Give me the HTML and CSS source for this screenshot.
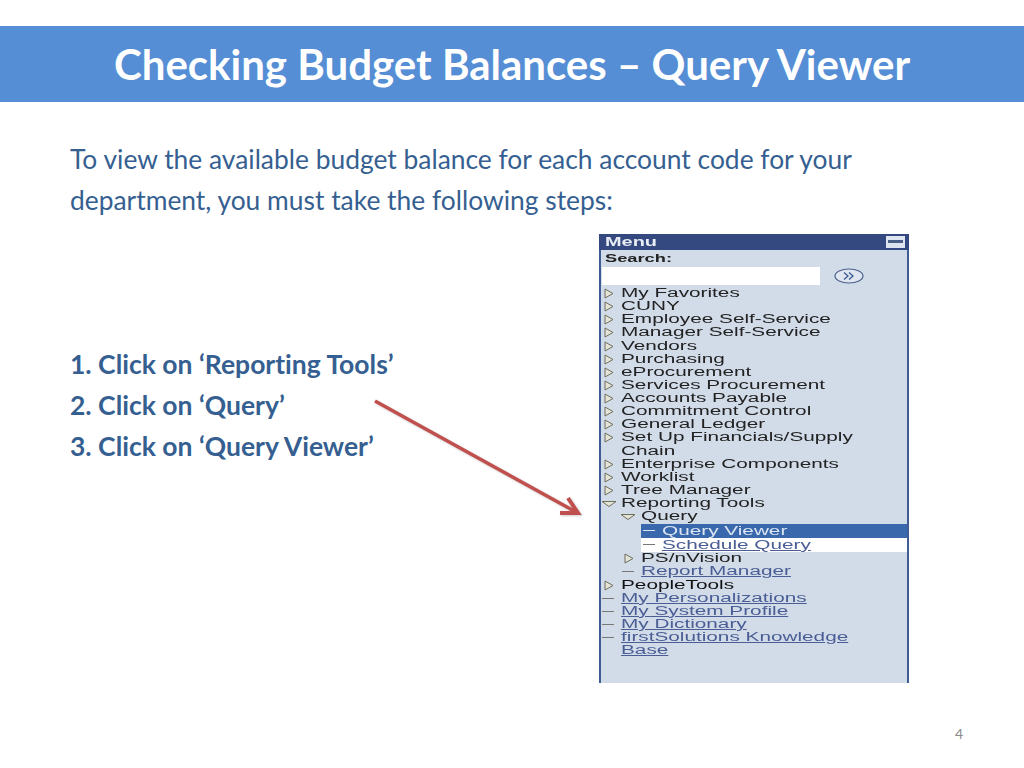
FILE: index.html
```html
<!DOCTYPE html>
<html lang="en">
<head>
  <meta charset="UTF-8" />
  <title>Checking Budget Balances</title>
  <link rel="stylesheet" href="styles.css">
</head>
<body>
  <svg width="0" height="0" class="defs">
    <symbol id="closed" viewBox="0 0 10 11"><path d="M1 1 L9 5.5 L1 10 Z" fill="#e3e3d8" stroke="#6f6f5c" stroke-width="1"/></symbol>
    <symbol id="open" viewBox="0 0 16 8"><path d="M1 1.5 L15 1.5 L8 6.5 Z" fill="#e3e3d8" stroke="#6f6f5c" stroke-width="1"/></symbol>
  </svg>

  <header class="title-bar">
    <h1>Checking Budget Balances – Query Viewer</h1>
  </header>

  <p class="intro">To view the available budget balance for each account code for your<br>department, you must take the following steps:</p>

  <div class="content">
    <ol class="steps">
      <li>1. Click on ‘Reporting Tools’</li>
      <li>2. Click on ‘Query’</li>
      <li>3. Click on ‘Query Viewer’</li>
    </ol>

    <div class="menu">
      <div class="menu-head"><span class="lbl">Menu</span><span class="collapse"></span></div>
      <div class="menu-body">
        <div class="search-label"><span class="lbl">Search:</span></div>
        <div class="search-row">
          <div class="search-box"></div>
          <svg class="go" width="30" height="16" viewBox="0 0 30 16">
            <ellipse cx="15" cy="8" rx="14" ry="7" fill="#dfe6ef" stroke="#4a5f8a" stroke-width="1.2"/>
            <path d="M10 4.5 L14 8 L10 11.5 M15 4.5 L19 8 L15 11.5" fill="none" stroke="#3b5a92" stroke-width="1.3"/>
          </svg>
        </div>

        <div class="row"><svg class="tri"><use href="#closed"/></svg><span class="lbl">My Favorites</span></div>
        <div class="row"><svg class="tri"><use href="#closed"/></svg><span class="lbl">CUNY</span></div>
        <div class="row"><svg class="tri"><use href="#closed"/></svg><span class="lbl">Employee Self-Service</span></div>
        <div class="row"><svg class="tri"><use href="#closed"/></svg><span class="lbl">Manager Self-Service</span></div>
        <div class="row"><svg class="tri"><use href="#closed"/></svg><span class="lbl">Vendors</span></div>
        <div class="row"><svg class="tri"><use href="#closed"/></svg><span class="lbl">Purchasing</span></div>
        <div class="row"><svg class="tri"><use href="#closed"/></svg><span class="lbl">eProcurement</span></div>
        <div class="row"><svg class="tri"><use href="#closed"/></svg><span class="lbl">Services Procurement</span></div>
        <div class="row"><svg class="tri"><use href="#closed"/></svg><span class="lbl">Accounts Payable</span></div>
        <div class="row"><svg class="tri"><use href="#closed"/></svg><span class="lbl">Commitment Control</span></div>
        <div class="row"><svg class="tri"><use href="#closed"/></svg><span class="lbl">General Ledger</span></div>
        <div class="row"><svg class="tri"><use href="#closed"/></svg><span class="lbl">Set Up Financials/Supply</span></div>
        <div class="row cont"><span class="lbl">Chain</span></div>
        <div class="row"><svg class="tri"><use href="#closed"/></svg><span class="lbl">Enterprise Components</span></div>
        <div class="row"><svg class="tri"><use href="#closed"/></svg><span class="lbl">Worklist</span></div>
        <div class="row"><svg class="tri"><use href="#closed"/></svg><span class="lbl">Tree Manager</span></div>
        <div class="row"><svg class="tri-open"><use href="#open"/></svg><span class="lbl">Reporting Tools</span></div>
        <div class="row sub"><svg class="tri-open"><use href="#open"/></svg><span class="lbl">Query</span></div>
        <div class="row leaf selected"><span class="dash"></span><span class="lbl">Query Viewer</span></div>
        <div class="row leaf hilite"><span class="dash"></span><a class="lbl">Schedule Query</a></div>
        <div class="row sub closed"><svg class="tri"><use href="#closed"/></svg><span class="lbl">PS/nVision</span></div>
        <div class="row sub link"><span class="dash"></span><a class="lbl">Report Manager</a></div>
        <div class="row strong"><svg class="tri"><use href="#closed"/></svg><span class="lbl">PeopleTools</span></div>
        <div class="row link"><span class="dash"></span><a class="lbl">My Personalizations</a></div>
        <div class="row link"><span class="dash"></span><a class="lbl">My System Profile</a></div>
        <div class="row link"><span class="dash"></span><a class="lbl">My Dictionary</a></div>
        <div class="row link"><span class="dash"></span><a class="lbl">firstSolutions Knowledge</a></div>
        <div class="row cont"><a class="lbl">Base</a></div>
      </div>
    </div>
  </div>

  <footer class="page-num">4</footer>

  <svg class="arrow" width="220" height="130" viewBox="0 0 220 130">
    <path d="M5 5 L206 116" fill="none" stroke="#c0504d" stroke-width="3.5"/>
    <path d="M198 102 L208 117 L190 117" fill="none" stroke="#c0504d" stroke-width="4"/>
  </svg>
</body>
</html>
```

FILE: styles.css
```css
html, body {
  margin: 0;
  padding: 0;
}

body {
  position: relative;
  width: 1024px;
  height: 768px;
  overflow: hidden;
  background-color: white;
  font-family: Lato, sans-serif;
  font-variant-ligatures: none;
}

.defs {
  position: absolute;
}

.title-bar {
  margin-top: 26px;
  height: 76px;
  background-color: #558ed5;
  display: flex;
  align-items: center;
  justify-content: center;
}

.title-bar h1 {
  margin: 0;
  color: white;
  font-size: 42px;
  font-weight: bold;
}

.intro {
  margin: 37px 0 0 70px;
  font-size: 26.4px;
  line-height: 41px;
  color: #365f91;
}

.content {
  display: flex;
  justify-content: space-between;
  margin-top: 13px;
  padding: 0 115px 0 70px;
}

.steps {
  list-style: none;
  margin: 110px 0 0;
  padding: 0;
  font-size: 26.5px;
  line-height: 41px;
  font-weight: bold;
  color: #365f91;
}

.menu {
  width: 310px;
  height: 449px;
  box-sizing: border-box;
  background-color: #d2dce9;
  border: solid #3f5c94;
  border-width: 0 2px;
  font-family: "Liberation Sans", sans-serif;
  font-size: 12.5px;
  color: #222;
  filter: blur(0.4px);
}

.lbl {
  display: inline-block;
  transform: scaleX(1.66);
  transform-origin: left center;
  white-space: nowrap;
}

.menu-head {
  height: 16px;
  margin: 0 -2px;
  padding: 0 4px 0 6px;
  background-color: #33497f;
  color: #e8ecf4;
  font-weight: bold;
  font-size: 12px;
  line-height: 16px;
  display: flex;
  justify-content: space-between;
  align-items: center;
}

.collapse {
  width: 19px;
  height: 12px;
  box-sizing: border-box;
  background-color: #4a5f85;
  border: solid #dfe5ee;
  border-width: 4px 2px 5px;
}

.menu-body {
  padding-top: 1px;
}

.search-label {
  height: 15px;
  line-height: 15px;
  padding-left: 4px;
  font-size: 11px;
  font-weight: bold;
}

.search-row {
  display: flex;
  align-items: center;
  gap: 14px;
  height: 20px;
  margin-bottom: 1px;
}

.search-box {
  width: 218px;
  height: 18px;
  margin-left: 1px;
  background-color: white;
}

.go {
  flex: none;
}

.row {
  display: flex;
  align-items: center;
  height: 13.13px;
  line-height: 13px;
  padding-left: 20px;
  position: relative;
}

.row .tri {
  position: absolute;
  left: 3px;
  top: 1px;
  width: 10px;
  height: 11px;
}

.row .tri-open {
  position: absolute;
  left: 0;
  top: 3px;
  width: 16px;
  height: 8px;
}

.row.sub {
  padding-left: 40px;
}

.row.sub .tri-open {
  left: 19px;
}

.row.sub.closed .tri {
  left: 23px;
}

.dash {
  position: absolute;
  left: 1px;
  top: 6px;
  width: 12px;
  height: 1px;
  background-color: #777;
}

.row.sub .dash {
  left: 21px;
}

.row.leaf {
  height: 14px;
  margin-left: 40px;
  padding-left: 21px;
}

.row.selected {
  margin-top: 1px;
}

.row.leaf .dash {
  left: 2px;
}

.row.selected {
  background-color: #3a68ac;
  color: #dbe5f2;
}

.row.selected .dash {
  background-color: #dbe5f2;
}

.row.hilite {
  background-color: white;
  color: #4a5d94;
}

a.lbl {
  text-decoration: underline;
  color: #4a5d94;
}

.row.strong {
  color: #111;
}

.page-num {
  position: absolute;
  right: 61px;
  top: 725px;
  font-size: 14px;
  color: #8a8a8a;
}

.arrow {
  position: absolute;
  left: 370px;
  top: 396px;
  filter: drop-shadow(1px 1px 1px rgba(0, 0, 0, 0.2));
}
```
